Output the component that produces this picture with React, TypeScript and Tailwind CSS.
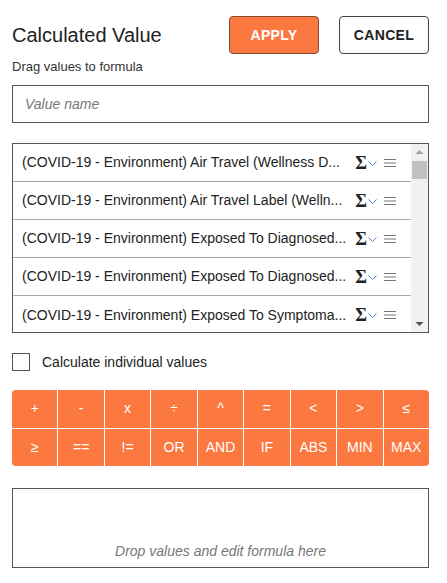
import React from "react";

const rows = [
  "(COVID-19 - Environment) Air Travel (Wellness D...",
  "(COVID-19 - Environment) Air Travel Label (Welln...",
  "(COVID-19 - Environment) Exposed To Diagnosed...",
  "(COVID-19 - Environment) Exposed To Diagnosed...",
  "(COVID-19 - Environment) Exposed To Symptoma...",
];

const ops = ["+", "-", "x", "÷", "^", "=", "<", ">", "≤", "≥", "==", "!=", "OR", "AND", "IF", "ABS", "MIN", "MAX"];

const RowIcons = () => (
  <div className="flex items-center shrink-0">
    <span className="text-[18px] font-bold text-[#222] leading-[18px]" style={{ fontFamily: '"Liberation Serif", serif' }}>Σ</span>
    <svg width="9" height="6" viewBox="0 0 9 6" className="ml-[1px] mt-[2px]">
      <path d="M0.5 0.5 L4.5 4.5 L8.5 0.5" fill="none" stroke="#5b8ad6" strokeWidth="1" />
    </svg>
    <svg width="12" height="10" viewBox="0 0 12 10" className="ml-[7px]">
      <path d="M0 1.5 H12 M0 5 H12 M0 8.5 H12" stroke="#777" strokeWidth="1.2" />
    </svg>
  </div>
);

const App = () => (
  <div className="w-[447px] h-[583px] bg-white pl-3 pr-[18px] pt-4 text-[#222]" style={{ fontFamily: '"Liberation Sans", Arial, sans-serif' }}>
    <div className="flex items-center h-[38px]">
      <h1 className="text-[20px] text-[#222] flex-1">Calculated Value</h1>
      <button className="w-[90px] h-[38px] bg-[#fb7841] border border-[#8a4a2e] rounded-[4px] text-white font-bold text-[14px] tracking-wide">APPLY</button>
      <button className="w-[90px] h-[38px] ml-5 bg-white border border-[#444] rounded-[4px] text-[#222] font-bold text-[14px] tracking-wide">CANCEL</button>
    </div>
    <div className="text-[13px] leading-[18px] mt-1 text-[#333]">Drag values to formula</div>
    <div className="mt-[9px] h-[38px] border border-[#555] flex items-center px-3">
      <span className="italic text-[14px] text-[#777]">Value name</span>
    </div>
    <div className="mt-5 h-[190px] border border-[#555] flex">
      <div className="flex-1 min-w-0 flex flex-col">
        {rows.map((r, i) => (
          <div key={i} className={`h-[38px] shrink-0 flex items-center justify-between pl-[9px] pr-[15px] ${i < rows.length - 1 ? "border-b border-[#a8a8a8]" : ""}`}>
            <span className="text-[14px] text-[#222] whitespace-nowrap">{r}</span>
            <RowIcons />
          </div>
        ))}
      </div>
      <div className="w-[17px] bg-[#f1f1f1] flex flex-col items-center">
        <svg width="17" height="17" viewBox="0 0 17 17">
          <path d="M4.5 10 L8.5 6 L12.5 10 Z" fill="#a3a3a3" />
        </svg>
        <div className="w-[15px] h-[18px] bg-[#c1c1c1]" />
        <div className="flex-1" />
        <svg width="17" height="17" viewBox="0 0 17 17">
          <path d="M4.5 7 L8.5 11 L12.5 7 Z" fill="#505050" />
        </svg>
      </div>
    </div>
    <label className="flex items-center mt-5 h-[18px]">
      <span className="w-[18px] h-[18px] border border-[#555] bg-white" />
      <span className="ml-3 text-[14px] text-[#222]">Calculate individual values</span>
    </label>
    <div className="mt-[19px] grid grid-cols-9 rounded-[4px] overflow-hidden bg-white gap-px">
      {ops.map((o) => (
        <div key={o} className="h-[37.5px] bg-[#fb7841] flex items-center justify-center text-white text-[14px]">{o}</div>
      ))}
    </div>
    <div className="mt-[22px] h-[80px] border border-[#555] flex items-end justify-center pb-[5px]">
      <span className="italic text-[14px] text-[#777]">Drop values and edit formula here</span>
    </div>
  </div>
);

export default App;
